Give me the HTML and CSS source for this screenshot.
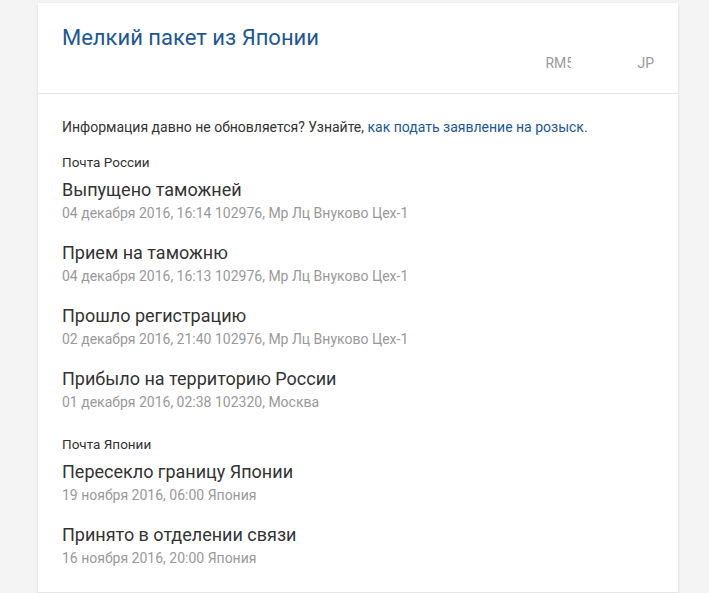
FILE: index.html
```html
<!DOCTYPE html>
<html lang="ru">
<head>
    <meta charset="UTF-8">
    <title>Мелкий пакет из Японии</title>
    <link rel="stylesheet" href="styles.css">
</head>
<body>
    <div class="card">
        <div class="card-head">
            <h1>Мелкий пакет из Японии</h1>
            <div class="ids">
                <span class="track">RM5</span>
                <span class="country">JP</span>
            </div>
        </div>

        <div class="card-body">
            <p class="notice">Информация давно не обновляется? Узнайте, <a href="#">как подать заявление на розыск.</a></p>

            <div class="group">
                <div class="group-name">Почта России</div>
                <div class="event">
                    <div class="event-title">Выпущено таможней</div>
                    <div class="event-meta">04 декабря 2016, 16:14 102976, Мр Лц Внуково Цех-1</div>
                </div>
                <div class="event">
                    <div class="event-title">Прием на таможню</div>
                    <div class="event-meta">04 декабря 2016, 16:13 102976, Мр Лц Внуково Цех-1</div>
                </div>
                <div class="event">
                    <div class="event-title">Прошло регистрацию</div>
                    <div class="event-meta">02 декабря 2016, 21:40 102976, Мр Лц Внуково Цех-1</div>
                </div>
                <div class="event">
                    <div class="event-title">Прибыло на территорию России</div>
                    <div class="event-meta">01 декабря 2016, 02:38 102320, Москва</div>
                </div>
            </div>

            <div class="group">
                <div class="group-name">Почта Японии</div>
                <div class="event">
                    <div class="event-title">Пересекло границу Японии</div>
                    <div class="event-meta">19 ноября 2016, 06:00 Япония</div>
                </div>
                <div class="event">
                    <div class="event-title">Принято в отделении связи</div>
                    <div class="event-meta">16 ноября 2016, 20:00 Япония</div>
                </div>
            </div>
        </div>
    </div>
</body>
</html>
```

FILE: styles.css
```css
body {
    margin: 0;
    padding: 3px 0 0 38px;
    background-color: #f4f4f4;
    font-family: Roboto, "Liberation Sans", sans-serif;
    color: #333;
}
.card {
    width: 640px;
    background-color: #fff;
    box-shadow: 0 1px 3px rgba(0,0,0,0.12);
    border-bottom: 1px solid #e5e5e5;
}
.card-head {
    padding: 21px 24px 21px 24px;
    border-bottom: 1px solid #e5e5e5;
}
h1 {
    margin: 0;
    font-size: 22px;
    font-weight: 400;
    line-height: 28px;
    color: #1c5796;
}
.ids {
    display: flex;
    justify-content: flex-end;
    margin-top: 2px;
    font-size: 14px;
    line-height: 18px;
    color: #9a9a9a;
}
.track {
    display: inline-block;
    width: 26px;
    overflow: hidden;
    white-space: nowrap;
    margin-right: 66px;
}
.card-body {
    padding: 24px 24px 23px 24px;
}
.notice {
    margin: 0 0 17px 0;
    font-size: 14px;
    line-height: 18px;
}
.notice a {
    color: #1c5796;
    text-decoration: none;
}
.group {
    margin-bottom: 22px;
}
.group:last-child {
    margin-bottom: 0;
}
.group-name {
    font-size: 13.5px;
    line-height: 18px;
    margin-bottom: 7px;
}
.event {
    margin-bottom: 17px;
}
.event:last-child {
    margin-bottom: 0;
}
.event-title {
    font-size: 18px;
    line-height: 24px;
}
.event-meta {
    font-size: 14px;
    line-height: 22px;
    color: #999;
}
```
